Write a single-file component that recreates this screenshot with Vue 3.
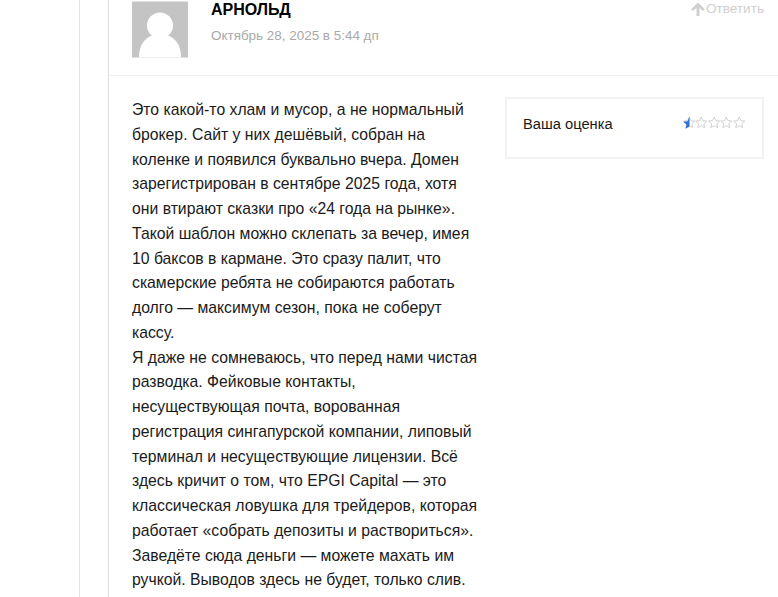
<script setup>
const stars = [0, 1, 2, 3, 4];
const starPath = "M6.5 .8l1.7 3.8 4.1 .4-3.1 2.8 .9 4.1-3.6-2.1-3.6 2.1 .9-4.1-3.1-2.8 4.1-.4z";
</script>

<template>
  <div class="page">
    <div class="thread">
      <article class="comment">
        <header class="comment-head">
          <svg class="avatar" viewBox="0 0 56 56" xmlns="http://www.w3.org/2000/svg">
            <rect width="56" height="56" fill="#c4c4c4" />
            <circle cx="28" cy="24" r="13" fill="#fff" />
            <path d="M7 56c0-16 9-23 21-23s21 7 21 23z" fill="#fff" />
          </svg>
          <div class="meta">
            <div class="author">АРНОЛЬД</div>
            <div class="date">Октябрь 28, 2025 в 5:44 дп</div>
          </div>
          <a class="reply">
            <svg class="reply-icon" viewBox="0 0 14 14" xmlns="http://www.w3.org/2000/svg">
              <path d="M7 .5l6.800 6.800-1.900 1.800-3.400-3.400V14H5.500V5.700L2.100 9.100 .2 7.300z" fill="#cfcfcf" />
            </svg>
            Ответить
          </a>
        </header>
        <div class="comment-body">
          <div class="comment-text">
            <p>
              Это какой-то хлам и мусор, а не нормальный брокер. Сайт у них дешёвый, собран на коленке и появился
              буквально вчера. Домен зарегистрирован в сентябре 2025 года, хотя они втирают сказки про «24 года на
              рынке». Такой шаблон можно склепать за вечер, имея 10 баксов в кармане. Это сразу палит, что скамерские
              ребята не собираются работать долго — максимум сезон, пока не соберут кассу.
            </p>
            <p>
              Я даже не сомневаюсь, что перед нами чистая разводка. Фейковые контакты, несуществующая почта,
              ворованная регистрация сингапурской компании, липовый терминал и несуществующие лицензии. Всё здесь
              кричит о том, что EPGI Capital — это классическая ловушка для трейдеров, которая работает «собрать
              депозиты и раствориться». Заведёте сюда деньги — можете махать им ручкой. Выводов здесь не будет, только
              слив.
            </p>
          </div>
          <aside class="rating">
            <span class="rating-label">Ваша оценка</span>
            <span class="stars">
              <svg v-for="n in stars" :key="n" class="star" viewBox="0 0 13 13" xmlns="http://www.w3.org/2000/svg">
                <path :d="starPath" fill="#fff" stroke="#cfcfcf" stroke-width="1" />
                <path v-if="n === 0" d="M6.800 .2V10.700L2.600 13l1-4.300L.2 5.700l4.500-.5z" fill="#2f72d2" />
              </svg>
            </span>
          </aside>
        </div>
      </article>
    </div>
  </div>
</template>

<style>
html,
body {
  margin: 0;
  background: #fff;
  overflow: hidden;
}
</style>

<style scoped>
.page {
  height: 597px;
  overflow: hidden;
  padding-left: 79px;
  font-family: "Liberation Sans", Arial, sans-serif;
  color: #1a1a1a;
}

.thread {
  height: 100%;
  padding-left: 28px;
  border-left: 1px solid #e2e2e2;
}

.comment {
  height: 100%;
  border-left: 1px solid #dedede;
}

.comment-head {
  display: flex;
  height: 76px;
  padding: 1px 14px 0 23px;
  box-sizing: border-box;
  border-bottom: 1px solid #f0f0f0;
}

.avatar {
  width: 56px;
  height: 57px;
  flex: none;
}

.meta {
  margin-left: 23px;
  flex: 1;
}

.author {
  font-size: 16px;
  font-weight: 700;
  line-height: 18px;
  color: #000;
}

.date {
  margin-top: 8px;
  font-size: 13.45px;
  line-height: 18px;
  color: #a9a9a9;
}

.reply {
  display: flex;
  align-items: flex-start;
  gap: 1px;
  font-size: 13.6px;
  line-height: 16px;
  color: #d0d0d0;
}

.reply-icon {
  width: 14px;
  height: 14px;
  margin-top: 1px;
}

.comment-body {
  display: flex;
  padding: 22px 14px 0 23px;
}

.comment-text {
  width: 347px;
  flex: none;
  font-size: 15.76px;
  line-height: 24.75px;
}

.comment-text p {
  margin: 0;
}

.rating {
  display: flex;
  justify-content: space-between;
  width: 259px;
  height: 62px;
  box-sizing: border-box;
  margin-top: -1px;
  margin-left: 26px;
  padding: 16px 17px 0 16px;
  border: 2px solid #f2f2f2;
}

.rating-label {
  font-size: 14.7px;
  line-height: 18px;
}

.stars {
  display: flex;
  height: 13px;
  margin-top: 1px;
}

.star {
  width: 12.500px;
  height: 13px;
}
</style>
